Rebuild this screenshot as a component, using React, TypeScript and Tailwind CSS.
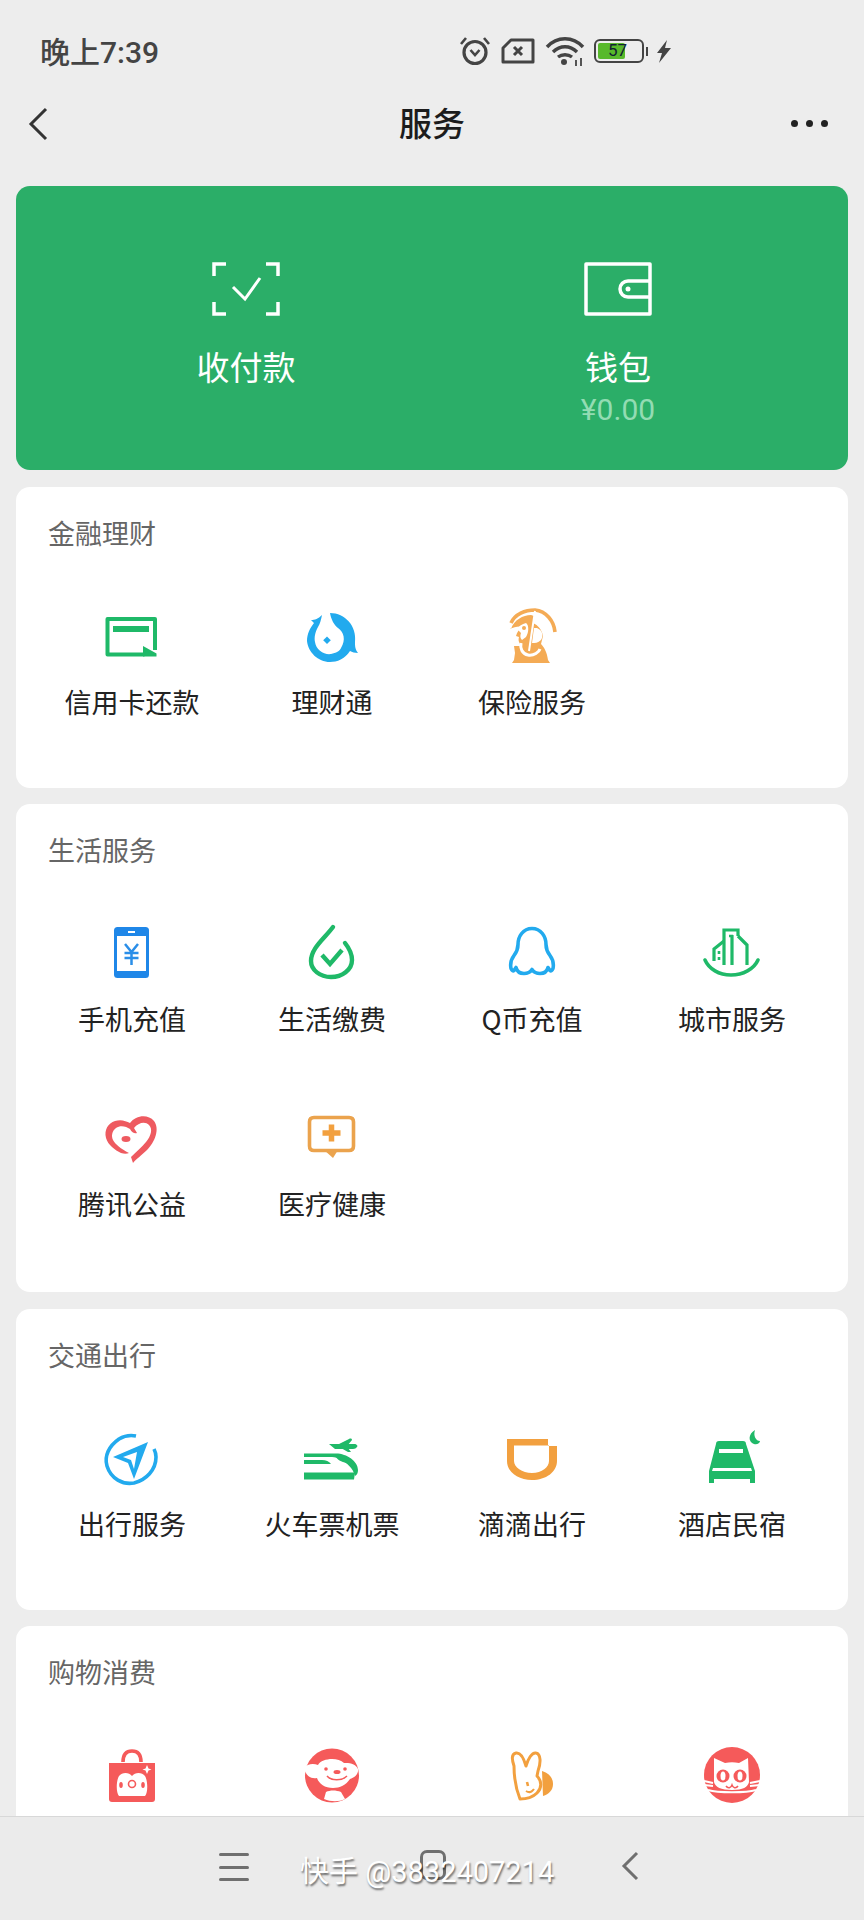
import type { ReactNode } from "react";

const GREEN = "#1fb968";
const BLUE = "#22aaee";
const ORANGE = "#f2a03f";
const RED = "#f55a5a";

function Glyph({ children }: { children: ReactNode }) {
  return (
    <svg width="64" height="64" viewBox="0 0 64 64" fill="none" className="shrink-0">
      {children}
    </svg>
  );
}

const CreditIcon = () => (
  <Glyph>
    <path d="M55 46V15H7.500v35.500h37" stroke={GREEN} strokeWidth="4" strokeLinejoin="round" />
    <rect x="13" y="22" width="36" height="6" fill={GREEN} />
    <path d="M43 42l13.500 7.500v3H43z" fill={GREEN} />
  </Glyph>
);

const FishIcon = () => (
  <Glyph>
    <path
      fillRule="evenodd"
      d="M30 9C45 9 57 22 55 38c0 4 0 7 3 11-3 0-6-1-8-2-5 8-13 11-20 11C18 58 8 48 7 37c0-7 3-13 7-18l-3-3c4 0 7-1 11-5-1 5-2 9-4 12-3 5-4 11-3 15 1 8 9 13 16 12 5-1 9-3 10-6C46 36 44 28 38 24 34 21 31 15 30 9z"
      fill={BLUE}
    />
    <path d="M27 32.500l3.800 3.800-3.800 3.800-3.800-3.800z" fill={BLUE} />
  </Glyph>
);

const InsuranceIcon = () => (
  <Glyph>
    <path d="M11 19C15 10 25 6 35 6c11 1 19 11 20 22" stroke="#f4ab55" strokeWidth="3.600" />
    <path
      fillRule="evenodd"
      d="M11 25c3-9 12-14 20-14l3 1-1 7c5 2 9 7 10 13l-2 8c3 3 6 8 7 16l2 3H12l2-3 1-7-1-7h7c-2-4-3-5-2-9l-3-1c1-4 3-7 7-9-4-1-9 0-13 2z"
      fill="#f4ab55"
    />
    <path d="M17 25c2-3 5-5 9-6 3 2 3 9 0 14l-4 3c-2-2-2-4-1-7z" fill="white" />
    <circle cx="24" cy="24" r="2" fill="#f4ab55" />
    <path d="M35 7l-6 40" stroke="white" strokeWidth="2" />
    <path d="M37 24c5 2 7 7 4 12-3 3-6 3-9 3l2-15z" fill="white" />
    <path d="M21 39c-1 5 1 11 7 12 6 1 11-3 12-6" stroke="white" strokeWidth="3" />
  </Glyph>
);

const PhoneIcon = () => (
  <Glyph>
    <rect x="14" y="6" width="35" height="51" rx="3.500" fill="#1f87e8" />
    <rect x="17" y="15" width="29" height="35" fill="white" />
    <rect x="28" y="10" width="7" height="2" fill="white" />
    <path d="M25 23l6.500 8 6.500-8M24.500 32h14M24.500 37h14M31.500 31v13" stroke="#2a8ee8" strokeWidth="2.500" />
  </Glyph>
);

const DropIcon = () => (
  <Glyph>
    <path
      d="M33 6C25 17 11 27 11 40c0 9 9 16 20 16s21-7 21-17c0-7-3-12-7-17"
      stroke={GREEN}
      strokeWidth="4.400"
      strokeLinecap="round"
    />
    <path d="M22 34l8 9 12-14" stroke={GREEN} strokeWidth="4.400" />
  </Glyph>
);

const PenguinIcon = () => (
  <Glyph>
    <path
      d="M32 7.500c-9 0-14 8-14 16 0 4-1 7-4 11-3 4-4 8-3 13 1 2 2 3 3 2l2-3c1 4 4 6 8 6 3 0 6-1 8-4 2 3 5 4 8 4 4 0 7-2 8-6l2 3c1 1 2 0 3-2 1-5 0-9-3-13-3-4-4-7-4-11 0-8-5-16-14-16z"
      stroke={BLUE}
      strokeWidth="3.600"
      strokeLinejoin="round"
    />
  </Glyph>
);

const CityIcon = () => (
  <Glyph>
    <path d="M5 39c4 9 14 15 26 15s23-6 27-15" stroke={GREEN} strokeWidth="3.600" strokeLinecap="round" />
    <path d="M24 44V9h14v6" stroke={GREEN} strokeWidth="3.200" />
    <path d="M38 15l9 9v20M32 14v30" stroke={GREEN} strokeWidth="3.200" />
    <path d="M24 20l-10 8v12" stroke={GREEN} strokeWidth="3.200" />
    <path d="M19 30v3M19 36v3M29 15h4" stroke={GREEN} strokeWidth="2.600" />
  </Glyph>
);

const HeartIcon = () => (
  <Glyph>
    <path
      fillRule="evenodd"
      d="M30 17c6-8 18-9 24-2 6 8 1 21-7 29-5 5-11 9-14 13l-2-6c5-5 11-10 15-15 5-6 7-13 3-17-4-4-11-2-15 3l3 5c-2 1-5 0-7-4-4-3-10-4-14-1-4 3-5 8-3 12 2 4 8 9 16 13-2 1-5 1-8 0-6-3-13-8-15-15-2-8 2-15 9-17 6-2 11 0 15 2z"
      fill="#ee5a60"
    />
    <ellipse cx="26" cy="33" rx="4.500" ry="3" fill="#ee5a60" />
  </Glyph>
);

const MedicalIcon = () => (
  <Glyph>
    <path
      d="M14 11.500h35c3 0 4.500 1.500 4.500 4.500v24c0 3-1.500 4.500-4.500 4.500H14c-3 0-4.500-1.500-4.500-4.500V16c0-3 1.500-4.500 4.500-4.500z"
      stroke="#eba34d"
      strokeWidth="3.600"
    />
    <path d="M24 44h14l-5 8z" fill="#eba34d" />
    <path d="M31.500 18.500v17M22.500 27h18" stroke={ORANGE} strokeWidth="5.500" />
  </Glyph>
);

const NavIcon = () => (
  <Glyph>
    <path d="M36 10a24 24 0 0 0-17 3C9 20 4 30 7 40c4 13 16 19 27 17 12-3 22-13 22-26 0-3-1-6-2-8" stroke={BLUE} strokeWidth="3.600" />
    <path fillRule="evenodd" d="M48 16L13 31l15 6 6 16zM37 26L23 31l8 3 3 9z" fill={BLUE} />
  </Glyph>
);

const TrainIcon = () => (
  <Glyph>
    <path d="M29 18h25c3 0 4 2 3 3-1 1-2 2-4 2H35zM39 18l10-5c2-1 3 0 3 1l-5 6zM41 22h7l3 4h-3z" fill={GREEN} />
    <path d="M4 27.500h32c11 0 22 8 22 16.500 0 3-1 5-3 6-2-8-8-13-14-16-3-2-6-3-9-3H4z" fill={GREEN} />
    <path d="M35 29c6 0 10 3 12 8-6-1-10-3-12-8z" fill={GREEN} />
    <path d="M4 34h18c4 0 7 1.500 9 4H4z" fill={GREEN} />
    <path d="M4 46.500h51l-1 7H4z" fill={GREEN} />
  </Glyph>
);

const DidiIcon = () => (
  <Glyph>
    <path
      fillRule="evenodd"
      d="M7 13h41v7h9v15c0 11-11 19-25 19S7 46 7 35zM14 19.500V35c0 6 8 12 18 12s17-6 17-12V19.500z"
      fill={ORANGE}
    />
  </Glyph>
);

const HotelIcon = () => (
  <Glyph>
    <path d="M16 18c0-2 1-3 3-3h24c2 0 3 1 3 3l9 27v12h-5v-4H14v4H9V45z" fill={GREEN} />
    <path d="M19 23h24v4H19zM13 42h38l1 3H12z" fill="white" />
    <path d="M55 4c-7 4-7 12-1 14 3 1 6-1 6-3-4 0-7-5-5-11z" fill={GREEN} />
  </Glyph>
);

const BagIcon = () => (
  <Glyph>
    <path d="M23 19c0-8 4-11 9-11s9 3 9 11" stroke={RED} strokeWidth="3.600" />
    <path d="M9 20h46v36c0 2-1 3-3 3H12c-2 0-3-1-3-3z" fill={RED} />
    <path d="M32 33c-3-4-10-4-13 0-3 5-3 17 0 20h26c3-3 3-15 0-20-3-4-10-4-13 0z" fill="white" />
    <ellipse cx="21" cy="42" rx="1.800" ry="3" fill={RED} />
    <ellipse cx="43" cy="42" rx="1.800" ry="3" fill={RED} />
    <circle cx="32" cy="41" r="3.500" stroke={RED} strokeWidth="1.600" />
    <path d="M47 22l1.500 3.500 3 1-3 1L47 31l-1.500-3.500-3-1 3-1z" fill="white" />
  </Glyph>
);

const DogIcon = () => (
  <Glyph>
    <circle cx="32" cy="32.500" r="27" fill={RED} />
    <path d="M4 25c3-4 9-5 14-3 4-7 20-8 26-2 5 0 11 0 14 6 1 5-4 9-8 10-4 6-10 9-17 9-8 0-14-4-16-10-5 1-11-1-13-10z" fill="white" />
    <circle cx="26" cy="26" r="1.800" fill={RED} />
    <circle cx="45" cy="26" r="1.800" fill={RED} />
    <ellipse cx="37" cy="29" rx="3.500" ry="2" fill={RED} />
    <path d="M27 33c4 5 15 5 20 0" stroke={RED} strokeWidth="1.500" />
    <path d="M26 49c4-2 10-2 15 0l4 7c-6 3-14 3-21 0z" fill="white" />
  </Glyph>
);

const RabbitIcon = () => (
  <Glyph>
    <path d="M42 28c7 2 11 7 11 13 0 6-4 10-10 12z" fill={ORANGE} />
    <path
      d="M20 56c-4-10-6-24-6-33-2-6-3-12 2-13 5-1 8 6 10 13 2-7 6-14 10-13 5 1 5 10 2 18l-1 5c5 5 5 12 0 17-4 4-10 6-17 6z"
      fill="white"
      stroke={ORANGE}
      strokeWidth="3"
      strokeLinejoin="round"
    />
    <path d="M27 39l1 4" stroke={ORANGE} strokeWidth="2.600" />
    <path d="M26 48c3 2 6 1 8-2" stroke={ORANGE} strokeWidth="2" />
  </Glyph>
);

const CatIcon = () => (
  <Glyph>
    <circle cx="32" cy="32" r="28" fill={RED} />
    <path d="M14 15l11 5c5-1 9-1 14 0l9-5 1 24c-1 5-6 8-17 8s-17-3-18-8z" fill="white" />
    <circle cx="23" cy="33" r="6.500" fill={RED} />
    <circle cx="40" cy="33" r="6.500" fill={RED} />
    <ellipse cx="23" cy="33" rx="2.500" ry="4.500" fill="white" />
    <ellipse cx="40" cy="33" rx="2.500" ry="4.500" fill="white" />
    <path d="M26 43c2 3 5 2 6-1 1 3 4 4 6 1" stroke={RED} strokeWidth="1.500" />
    <path d="M4 38l9 2M4 42l9 1M60 38l-10 2M60 42l-10 1" stroke="white" strokeWidth="1.800" />
    <path d="M8 47c10 3 38 3 48 0" stroke="white" strokeWidth="2" />
  </Glyph>
);

function Tile({ icon, label }: { icon: ReactNode; label: string }) {
  return (
    <div className="flex h-[118px] flex-col items-center">
      {icon}
      <span className="mt-4 whitespace-nowrap font-['Noto_Sans_CJK_SC',sans-serif] text-[27px] leading-9 text-[#222]">
        {label}
      </span>
    </div>
  );
}

function Section({ title, pad = "pb-[66px]", children }: { title: string; pad?: string; children: ReactNode }) {
  return (
    <section className={`shrink-0 rounded-[14px] bg-white px-4 pt-[28px] ${pad}`}>
      <h2 className="pl-[16px] font-['Noto_Sans_CJK_SC',sans-serif] text-[27px] font-normal leading-9 text-[#666]">{title}</h2>
      <div className="mt-[53px] grid grid-cols-4 gap-y-[67px]">{children}</div>
    </section>
  );
}

export default function App() {
  return (
    <div className="flex h-[1920px] w-[864px] flex-col overflow-hidden bg-[#ededed] font-['Roboto','Noto_Sans_CJK_SC',sans-serif]">
      <div className="flex h-[80px] shrink-0 items-center pt-[25px]">
        <span className="ml-[40px] text-[30px] font-medium text-[#444]">晚上7:39</span>
        <div className="ml-[300px] mt-[-3px] flex items-center text-[#444]">
          <svg width="32" height="30" viewBox="0 0 32 30" fill="none" stroke="currentColor">
            <circle cx="16" cy="16.500" r="11" strokeWidth="3.200" />
            <path d="M11.500 14l4.500 5 4.500-5" strokeWidth="2.600" />
            <path d="M2 8l5-6M30 8l-5-6" strokeWidth="2.600" />
          </svg>
          <svg width="34" height="26" viewBox="0 0 34 26" fill="none" stroke="currentColor" className="ml-[10px]">
            <path d="M10 2h22v22H2V10z" strokeWidth="3" strokeLinejoin="round" />
            <path d="M13 9l8 8M21 9l-8 8" strokeWidth="3" />
          </svg>
          <svg width="40" height="30" viewBox="0 0 40 30" fill="none" stroke="currentColor" className="ml-[10px]">
            <path d="M2 11c10-11 26-11 36 0M8 16c7-7 17-7 24 0M13 21c4-3 10-3 14 0" strokeWidth="3.400" />
            <circle cx="19" cy="26" r="3" fill="currentColor" stroke="none" />
            <path d="M31 24v6M36 22v8" strokeWidth="1.800" />
          </svg>
          <div className="relative ml-[9px] flex h-[24px] w-[50px] items-center rounded-[6px] border-[2.500px] border-[#444] p-[2px]">
            <div className="h-full w-[27px] rounded-[2px] bg-[#58b92b]" />
            <span className="absolute left-[12px] top-[-1px] text-[17px] leading-[21px] text-[#123]">57</span>
          </div>
          <div className="ml-[2px] h-[9px] w-[2px] bg-[#444]" />
          <svg width="15" height="23" viewBox="0 0 15 23" fill="currentColor" className="ml-[8px]">
            <path d="M11 0L1 13h5l-3 10L15 8H9z" />
          </svg>
        </div>
      </div>

      <header className="relative flex h-[88px] shrink-0 items-center justify-center">
        <svg width="20" height="34" viewBox="0 0 20 34" fill="none" stroke="#333" strokeWidth="3" className="absolute left-[28px] top-[27px]">
          <path d="M18 2L3 17l15 15" />
        </svg>
        <h1 className="mt-[2px] text-[33px] font-medium text-[#1c1c1c]">服务</h1>
        <div className="absolute right-[36px] top-[40px] flex gap-[8px]">
          <span className="h-[7px] w-[7px] rounded-full bg-[#222]" />
          <span className="h-[7px] w-[7px] rounded-full bg-[#222]" />
          <span className="h-[7px] w-[7px] rounded-full bg-[#222]" />
        </div>
      </header>

      <main className="mx-4 mt-[18px] flex min-h-0 flex-1 flex-col gap-[16.500px] overflow-hidden">
        <div className="grid h-[284px] shrink-0 grid-cols-2 rounded-[14px] bg-[#2bae68] px-[44px] pt-[76px] text-white">
          <div className="flex flex-col items-center">
            <svg width="68" height="54" viewBox="0 0 68 54" fill="none" stroke="white" strokeWidth="3.500">
              <path d="M14 2H2v12M54 2h12v12M2 40v12h12M66 40v12H54" />
              <path d="M21 25l12 12 15-21" strokeWidth="3" />
            </svg>
            <span className="mt-[30px] text-[33px] leading-[46px]">收付款</span>
          </div>
          <div className="flex flex-col items-center">
            <svg width="68" height="54" viewBox="0 0 68 54" fill="none" stroke="white" strokeWidth="3.500">
              <path d="M2 2h64v50H2z" strokeLinejoin="round" />
              <path d="M66 19H44a8 8 0 0 0 0 16h22" />
              <circle cx="44" cy="27" r="2.500" fill="white" stroke="none" />
            </svg>
            <span className="mt-[30px] text-[33px] leading-[46px]">钱包</span>
            <span className="text-[30px] leading-[36px] text-[#93dcb3]">¥0.00</span>
          </div>
        </div>

        <Section title="金融理财">
          <Tile icon={<CreditIcon />} label="信用卡还款" />
          <Tile icon={<FishIcon />} label="理财通" />
          <Tile icon={<InsuranceIcon />} label="保险服务" />
        </Section>

        <Section title="生活服务" pad="pb-[68px]">
          <Tile icon={<PhoneIcon />} label="手机充值" />
          <Tile icon={<DropIcon />} label="生活缴费" />
          <Tile icon={<PenguinIcon />} label="Q币充值" />
          <Tile icon={<CityIcon />} label="城市服务" />
          <Tile icon={<HeartIcon />} label="腾讯公益" />
          <Tile icon={<MedicalIcon />} label="医疗健康" />
        </Section>

        <Section title="交通出行">
          <Tile icon={<NavIcon />} label="出行服务" />
          <Tile icon={<TrainIcon />} label="火车票机票" />
          <Tile icon={<DidiIcon />} label="滴滴出行" />
          <Tile icon={<HotelIcon />} label="酒店民宿" />
        </Section>

        <Section title="购物消费">
          <Tile icon={<BagIcon />} label="" />
          <Tile icon={<DogIcon />} label="" />
          <Tile icon={<RabbitIcon />} label="" />
          <Tile icon={<CatIcon />} label="" />
        </Section>
      </main>

      <nav className="relative flex h-[104px] shrink-0 items-start border-t border-[#d8d8d8] bg-[#ebebeb] pt-[36px]">
        <div className="ml-[219px] flex w-[30px] flex-col gap-[9.500px]">
          <span className="h-[3px] rounded-full bg-[#6f6f6f]" />
          <span className="h-[3px] rounded-full bg-[#6f6f6f]" />
          <span className="h-[3px] rounded-full bg-[#6f6f6f]" />
        </div>
        <div className="ml-[171px] mt-[-3px] h-[30px] w-[26px] rounded-[7px] border-[3px] border-[#6f6f6f]" />
        <svg width="18" height="30" viewBox="0 0 18 30" fill="none" stroke="#6f6f6f" strokeWidth="3" className="ml-[175px] mt-[-2px]">
          <path d="M16 2L3 15l13 13" />
        </svg>
        <span className="absolute left-[300px] top-[37px] whitespace-nowrap text-[29px] leading-9 text-white [text-shadow:1px_2px_2px_rgba(0,0,0,0.55)]">
          快手 @3832407214
        </span>
      </nav>
    </div>
  );
}
